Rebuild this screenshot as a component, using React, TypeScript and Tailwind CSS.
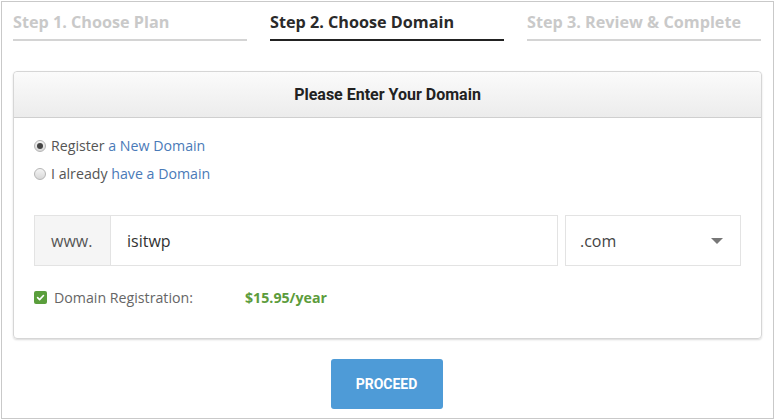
import React from "react";

export default function App() {
  return (
    <div className="w-[775px] h-[420px] bg-white overflow-hidden">
      <div className="ml-[1px] mt-[1px] w-[773px] h-[418px] border border-[#c9c9c9] bg-white flex flex-col">
        <div className="flex gap-[23px] pl-[11px] pr-[12px] pt-[9px]" style={{ fontFamily: '"Open Sans", sans-serif' }}>
          <div className="w-[234px] h-[30px] border-b-2 border-[#d4d4d4] text-[16.2px] font-bold text-[#c9c9c9] leading-[22px]">Step 1. Choose Plan</div>
          <div className="w-[234px] h-[30px] border-b-2 border-[#222] text-[16.2px] font-bold text-[#2a2a2a] leading-[22px]">Step 2. Choose Domain</div>
          <div className="w-[234px] h-[30px] border-b-2 border-[#d4d4d4] text-[16.2px] font-bold text-[#c9c9c9] leading-[22px]">Step 3. Review &amp; Complete</div>
        </div>
        <div className="ml-[11px] mt-[30px] w-[749px] h-[268px] border border-[#d6d6d6] rounded-[4px] shadow-[0_1px_2px_rgba(0,0,0,0.15)] flex flex-col">
          <div className="h-[46px] bg-gradient-to-b from-[#fbfbfb] to-[#ececec] border-b border-[#cfcfcf] rounded-t-[4px] flex items-center justify-center text-[16px] font-bold text-[#222]" style={{ fontFamily: 'Roboto, sans-serif' }}>
            Please Enter Your Domain
          </div>
          <div className="flex flex-col px-[20px] pt-[18px]" style={{ fontFamily: '"Open Sans", sans-serif' }}>
            <div className="flex items-center h-[20px] text-[14.2px] text-[#555]">
              <span className="w-[12px] h-[12px] rounded-full border border-[#b5b5b5] bg-gradient-to-b from-[#f4f4f4] to-[#d8d8d8] flex items-center justify-center mr-[5px]">
                <span className="w-[6px] h-[6px] rounded-full bg-[#444]"></span>
              </span>
              <span>Register&nbsp;</span>
              <span className="text-[#4a7ab8]">a New Domain</span>
            </div>
            <div className="flex items-center h-[20px] mt-[8px] text-[14.2px] text-[#555]">
              <span className="w-[12px] h-[12px] rounded-full border border-[#b5b5b5] bg-gradient-to-b from-[#f4f4f4] to-[#d8d8d8] mr-[5px]"></span>
              <span>I already&nbsp;</span>
              <span className="text-[#4a7ab8]">have a Domain</span>
            </div>
            <div className="flex mt-[31px] h-[51px] gap-[7px]">
              <div className="flex flex-1 border border-[#e3e3e3]">
                <div className="w-[76px] bg-[#f5f5f5] border-r border-[#e3e3e3] flex items-center pl-[16px] text-[16px] text-[#555]">www.</div>
                <div className="flex-1 flex items-center pl-[16px] text-[16px] text-[#333]">isitwp</div>
              </div>
              <div className="w-[176px] border border-[#e3e3e3] flex items-center justify-between pl-[14px] pr-[17px] text-[16px] text-[#444]">
                <span>.com</span>
                <span className="w-0 h-0 border-l-[6px] border-r-[6px] border-t-[6px] border-l-transparent border-r-transparent border-t-[#777]"></span>
              </div>
            </div>
            <div className="flex items-center mt-[21px] text-[14.2px]">
              <span className="w-[13px] h-[13px] rounded-[2px] bg-[#5a9e3c] flex items-center justify-center mr-[7px]">
                <svg width="9" height="9" viewBox="0 0 10 10"><path d="M1.8 5.2 L4 7.3 L8.3 2.8" stroke="white" strokeWidth="1.8" fill="none" strokeLinecap="round" strokeLinejoin="round" /></svg>
              </span>
              <span className="text-[#666] w-[191px]">Domain Registration:</span>
              <span className="text-[#5c9c3c] font-bold">$15.95/year</span>
            </div>
          </div>
        </div>
        <div className="flex justify-center mt-[20px] pr-[2px]">
          <div className="w-[112px] h-[50px] rounded-[3px] bg-[#4e9bd7] flex items-center justify-center text-white text-[14px] font-bold" style={{ fontFamily: 'Roboto, sans-serif' }}>PROCEED</div>
        </div>
      </div>
    </div>
  );
}
